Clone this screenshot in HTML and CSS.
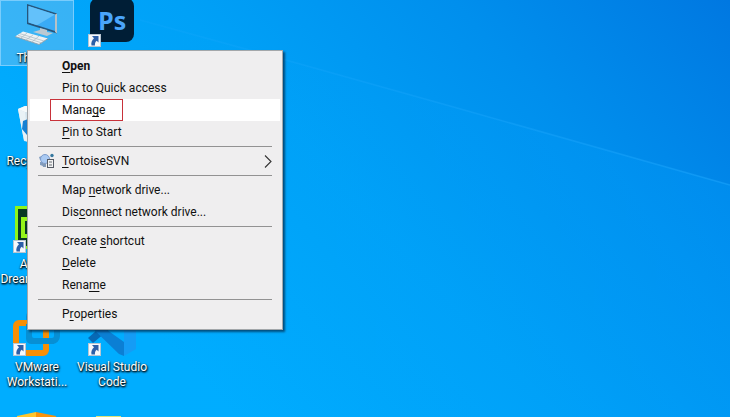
FILE: index.html
```html
<!DOCTYPE html>
<html lang="en">
<head>
<meta charset="utf-8">
<title>Desktop</title>
<link rel="stylesheet" href="styles.css">
</head>
<body>
<svg class="defs" aria-hidden="true">
  <symbol id="shortcut" viewBox="0 0 13 13">
    <rect width="13" height="13" fill="#b9c6d2"/>
    <rect x="1" y="1" width="11" height="11" fill="#f6f8fb"/>
    <path d="M4 2H10.500V8.500L8.700 6.700C7 8 6.800 9.500 7 11.500H3.500C2.800 8.500 4 6 6 4.200Z" fill="#2c5fa8"/>
  </symbol>
</svg>
<main class="desktop">
  <svg class="wallpaper" viewBox="0 0 730 417" preserveAspectRatio="none" aria-hidden="true">
    <defs>
      <linearGradient id="sky" gradientUnits="userSpaceOnUse" x1="220" y1="400" x2="720" y2="-60">
        <stop offset="0" stop-color="#00adff"/>
        <stop offset=".35" stop-color="#00a1f7"/>
        <stop offset=".65" stop-color="#008fed"/>
        <stop offset="1" stop-color="#0074df"/>
      </linearGradient>
      <linearGradient id="beam" x1="0" x2="1">
        <stop offset="0" stop-color="#22aaff" stop-opacity=".15"/>
        <stop offset="1" stop-color="#22aaff" stop-opacity=".45"/>
      </linearGradient>
      <linearGradient id="floor" x1="0" x2="1">
        <stop offset="0" stop-color="#00a6ff" stop-opacity="0"/>
        <stop offset="1" stop-color="#00a0ff" stop-opacity=".25"/>
      </linearGradient>
    </defs>
    <rect width="730" height="417" fill="url(#sky)"/>
    <path d="M140 20L300 64L730 185V417H140Z" fill="url(#floor)"/>
    <path d="M140 20L300 64L450 106L730 185" fill="none" stroke="url(#beam)" stroke-width="1.500"/>
  </svg>

  <div class="icons">
    <a class="icon selected" href="#pc">
      <svg viewBox="0 0 48 48" aria-hidden="true">
        <path d="M14 4L44 13.500V33.500L14 24Z" fill="#27557b"/>
        <path d="M15.500 6L42 14.500V31L15.500 22.500Z" fill="#3aabf6"/>
        <path d="M15.500 6L42 14.500L24 25.200L15.500 22.500Z" fill="#63c1fa"/>
        <path d="M42 14.500L44 13.500V33.500L42 32Z" fill="#b8c1c7"/>
        <path d="M27 28L34 30V32L40 33L34 36L20 32L27 30Z" fill="#bbc9d2"/>
        <path d="M10 31.500L35 38.500L26 44.500L2 36.500Z" fill="#edf1f3"/>
        <path d="M2 36.500L26 44.500L35 38.500" fill="none" stroke="#8ba3b2"/>
        <path d="M7 33.700L31 41M5 35.300L29 43M14 33L8 38M20 35L13 40M26 36L19 42" fill="none" stroke="#a9b9c3" stroke-width=".7"/>
      </svg>
      <span>This PC</span>
    </a>
    <a class="icon" href="#photoshop" aria-label="Photoshop">
      <svg viewBox="0 0 48 48" aria-hidden="true">
        <rect x="2" y="-2" width="44" height="44" rx="8" fill="#001e36"/>
        <text class="ps" x="24" y="30" text-anchor="middle">Ps</text>
        <use href="#shortcut" y="34" width="13" height="13"/>
      </svg>
    </a>
    <a class="icon" href="#bin">
      <svg viewBox="0 0 48 48" aria-hidden="true">
        <path d="M5 6L12 3L38 5L42 9L37 39L30 42L11 38Z" fill="#d5e5ee"/>
        <path d="M5 6L12 9L42 9L36 5L12 3Z" fill="#f6fafb"/>
        <path d="M12 9L15 39L11 37L5 6Z" fill="#e9f2f6"/>
        <path d="M10 18L15 16L20 21L15 23V27L20 30L14 32L9 26Z" fill="#1681d3"/>
      </svg>
      <span>Recycle Bin</span>
    </a>
    <span class="icon"></span>
    <a class="icon" href="#dreamweaver">
      <svg viewBox="0 0 48 48" aria-hidden="true">
        <rect x="2" width="44" height="43" fill="#8cf51c"/>
        <rect x="5" y="3" width="38" height="37" fill="#073923"/>
        <path d="M8 11H20Q28 11 28 21T20 32H8ZM12 15V28H18Q23 28 23 21T18 15Z" fill="#94f51a" fill-rule="evenodd"/>
        <use href="#shortcut" y="34" width="13" height="13"/>
      </svg>
      <span>Adobe Dreamweaver</span>
    </a>
    <span class="icon"></span>
    <a class="icon" href="#vmware">
      <svg viewBox="0 0 48 48" aria-hidden="true">
        <rect x="16" y="3" width="28" height="29" rx="5" fill="none" stroke="#078fd4" stroke-width="6"/>
        <rect x="3" y="14" width="30" height="30" rx="3" fill="none" stroke="#f78f05" stroke-width="6"/>
        <path d="M16 15V29Q16 32 19 32H41" fill="none" stroke="#078fd4" stroke-width="6"/>
        <use href="#shortcut" y="34" width="13" height="13"/>
      </svg>
      <span>VMware Workstati...</span>
    </a>
    <a class="icon" href="#code">
      <svg viewBox="0 0 48 48" aria-hidden="true">
        <path d="M0 29L5 34L36 8V2L32 1Z" fill="#0769b5"/>
        <path d="M0 15L5 11L36 33V47L31 45Z" fill="#0b7fd4"/>
        <path d="M36 0L48 6V40L36 47Z" fill="#159cf5"/>
        <use href="#shortcut" y="34" width="13" height="13"/>
      </svg>
      <span>Visual Studio Code</span>
    </a>
    <a class="icon" href="#box" aria-label="Box">
      <svg viewBox="0 0 48 48" aria-hidden="true">
        <path d="M4 4L23 0V25L4 18Z" fill="#ffc52c"/>
        <path d="M23 0L43 4V18L23 25Z" fill="#fa920b"/>
      </svg>
    </a>
    <a class="icon" href="#folder" aria-label="Folder">
      <svg viewBox="0 0 48 48" aria-hidden="true"><rect x="8" y="4" width="25" height="38" fill="#dce17a"/></svg>
    </a>
  </div>

  <nav class="menu" aria-label="Context menu">
    <button class="default"><u>O</u>pen</button>
    <button>Pin to Quick access</button>
    <button class="hot"><span class="marked">Mana<u>g</u>e</span></button>
    <button><u>P</u>in to Start</button>
    <hr>
    <button class="parent"><svg class="tortoise" viewBox="0 0 17 16" aria-hidden="true">
        <path d="M1 4L4 3L5 6L2 7ZM2 9L5 9L5 13L2 12Z" fill="#829dc0"/>
        <ellipse cx="7" cy="6" rx="4.500" ry="4.500" fill="#a9c9f2" stroke="#7d9bca"/>
        <path d="M4 10L8 11V14H5Z" fill="#8299b6"/>
        <circle cx="14" cy="2.500" r="1.700" fill="#36779e"/>
        <rect x="9.500" y="6.500" width="6" height="8" fill="#f2f2f2" stroke="#555b65"/>
        <path d="M11 9H14M11 12H14" stroke="#666c74"/>
      </svg><span><u>T</u>ortoiseSVN</span><svg class="chevron" viewBox="0 0 8 13" aria-hidden="true"><path d="M1 .5L7 6.500L1 12.500" fill="none" stroke="#333" stroke-width="1.100"/></svg></button>
    <hr>
    <button>Map <u>n</u>etwork drive...</button>
    <button>Dis<u>c</u>onnect network drive...</button>
    <hr>
    <button>Create <u>s</u>hortcut</button>
    <button><u>D</u>elete</button>
    <button>Rena<u>m</u>e</button>
    <hr>
    <button>P<u>r</u>operties</button>
  </nav>
</main>
</body>
</html>
```
FILE: styles.css
```css
* { box-sizing: border-box; }
body {
  margin: 0;
  font: 12px/15px Roboto, "Noto Sans", sans-serif;
}
.defs { position: absolute; width: 0; height: 0; }
.desktop {
  position: relative;
  height: 100vh;
  overflow: hidden;
  background: #00a4fa;
}
.wallpaper { position: absolute; inset: 0; width: 100%; height: 100%; }
.icons {
  position: relative;
  display: grid;
  grid-template-columns: 74px 74px;
  grid-auto-rows: 103px;
  column-gap: 1px;
}
.icon {
  display: flex;
  flex-direction: column;
  align-items: center;
  align-self: start;
  gap: 3px;
  color: #fff;
  text-align: center;
  text-decoration: none;
  text-shadow: 1px 1px 2px #000, 0 1px 2px #000;
}
.icon svg { flex: none; width: 48px; height: 48px; }
.icon.selected {
  background: rgba(125, 195, 240, .45);
  box-shadow: inset 0 0 0 1px rgba(150, 215, 255, .7);
}
.ps { font: 700 25px "Open Sans", sans-serif; fill: #4aa5fb; text-shadow: none; }
.menu {
  position: absolute;
  top: 50px;
  left: 27px;
  display: flex;
  flex-direction: column;
  width: 256px;
  padding: 4px 2px;
  border: 1px solid #a3a7aa;
  background: #efeeef;
  box-shadow: 2px 2px 2px rgba(0, 30, 60, .65);
}
.menu button {
  display: flex;
  align-items: center;
  height: 22px;
  padding: 0 8px 0 32px;
  border: 0;
  background: none;
  color: #111;
  font: inherit;
  text-align: left;
  white-space: pre;
}
.menu u { text-underline-offset: 2px; text-decoration-skip-ink: none; }
.menu .default { font-weight: 700; }
.menu .hot { background: #fff; padding-left: 20px; }
.marked {
  height: 22px;
  padding: 3px 17px 0 11px;
  border: 1px solid #c8323a;
}
.menu .parent { padding-left: 8px; }
.tortoise { width: 17px; height: 16px; margin-right: 7px; }
.chevron { width: 8px; height: 13px; margin-left: auto; }
.menu hr {
  width: 234px;
  height: 1px;
  margin: 3px 8px;
  border: 0;
  background: #929292;
}
```
